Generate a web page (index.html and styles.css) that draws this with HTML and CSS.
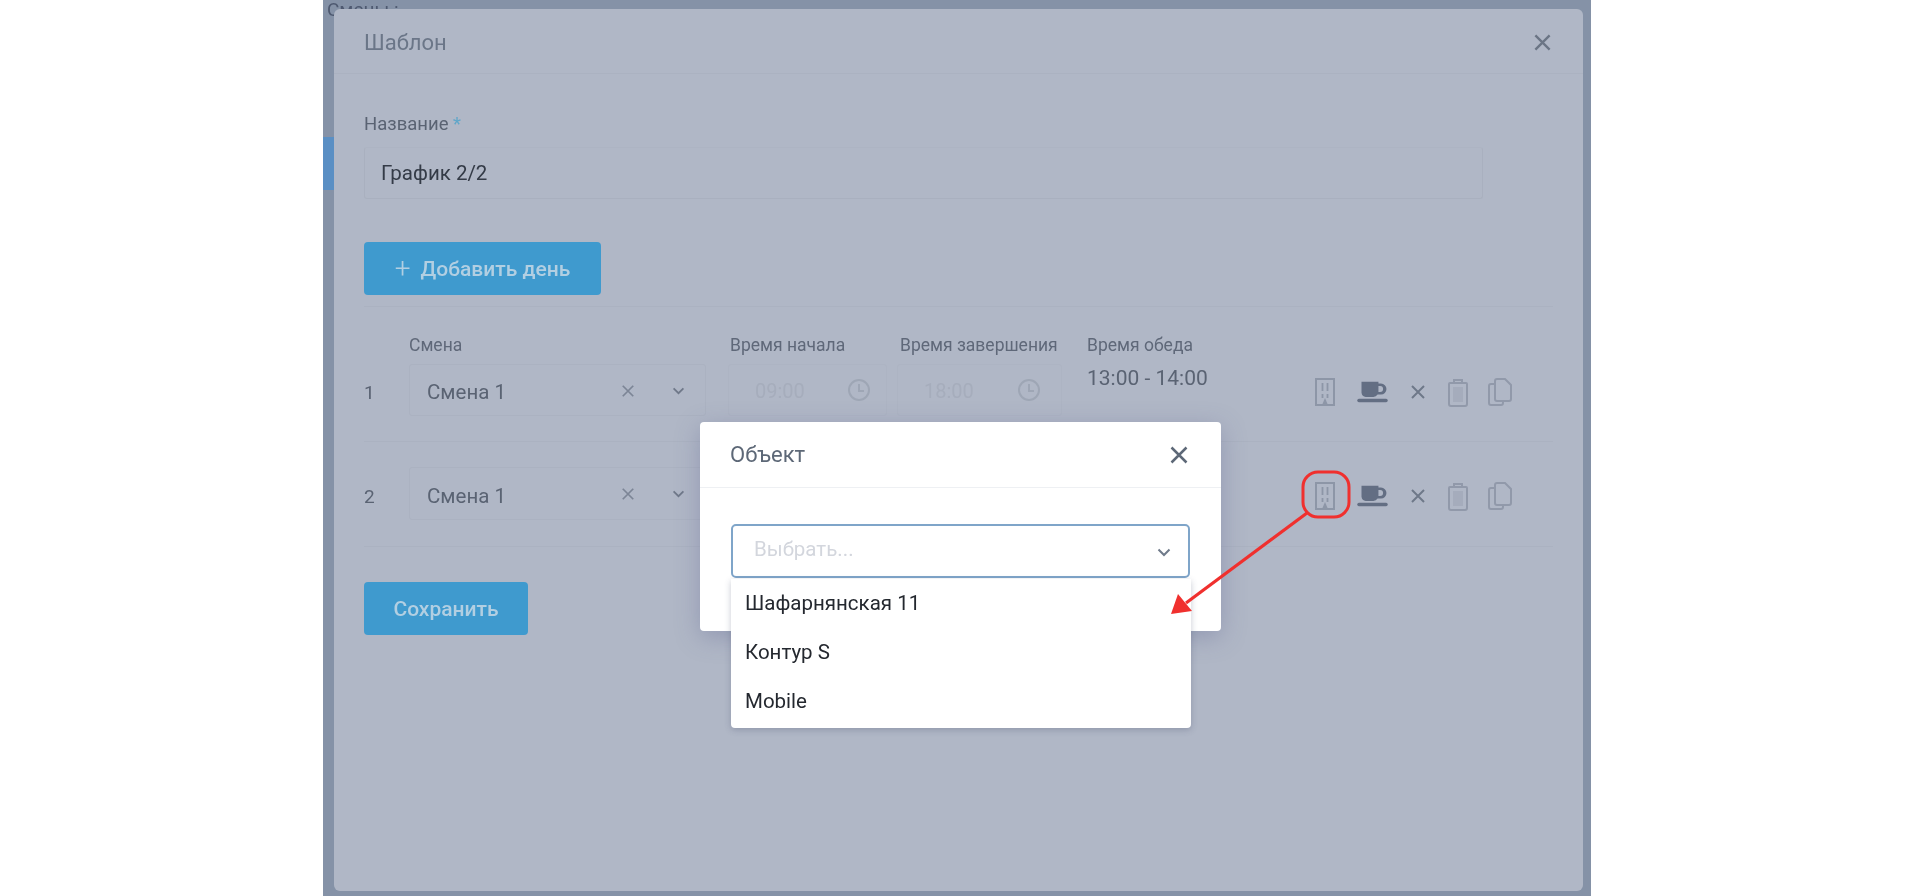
FILE: index.html
```html
<!DOCTYPE html>
<html lang="ru">
<head>
<meta charset="utf-8">
<title>Шаблон</title>
<link rel="stylesheet" href="styles.css">
</head>
<body>
<svg class="defs" width="0" height="0" aria-hidden="true">
  <defs>
    <symbol id="i-door" viewBox="0 0 22 30"><path d="M2 2h18v26H2z" fill="none" stroke="currentColor" stroke-width="2"/><path d="M8.500 6v8M13.500 6v8M8.500 17v4M13.500 17v4" stroke="currentColor" stroke-width="1.800" fill="none"/><path d="M11 21l3 7H8z" fill="currentColor"/></symbol>
    <symbol id="i-cup" viewBox="0 0 36 26"><path d="M5 1h20v2h3a6 6 0 0 1 0 13h-4a6 6 0 0 1-5 3H10a6 6 0 0 1-5-5z" fill="currentColor"/><path d="M25 6v7h2a3.500 3.500 0 0 0 0-7z" fill="#b0b7c6"/><rect x="0" y="21" width="36" height="4" rx="2" fill="currentColor"/></symbol>
    <symbol id="i-x" viewBox="0 0 16 16"><path d="M2 2l12 12M14 2L2 14" stroke="currentColor" stroke-width="2" fill="none"/></symbol>
    <symbol id="i-trash" viewBox="0 0 22 30"><path d="M3 6h16a1 1 0 0 1 1 1v20a2 2 0 0 1-2 2H4a2 2 0 0 1-2-2V7a1 1 0 0 1 1-1zM7 6V3h8v3" fill="none" stroke="currentColor" stroke-width="2"/><path d="M6 10h10v15H6z" fill="currentColor" opacity=".35"/></symbol>
    <symbol id="i-copy" viewBox="0 0 24 30"><path d="M9 2h8l6 6v14a2 2 0 0 1-2 2H9a2 2 0 0 1-2-2V4a2 2 0 0 1 2-2z" fill="none" stroke="currentColor" stroke-width="2"/><path d="M6 7H3a2 2 0 0 0-2 2v17a2 2 0 0 0 2 2h10a2 2 0 0 0 2-2v-2" fill="none" stroke="currentColor" stroke-width="2"/></symbol>
    <symbol id="i-clock" viewBox="0 0 24 24"><circle cx="12" cy="12" r="10" fill="none" stroke="currentColor" stroke-width="2"/><path d="M12 6v7h5" fill="none" stroke="currentColor" stroke-width="2"/></symbol>
    <symbol id="i-chev" viewBox="0 0 14 9"><path d="M1.500 1.500L7 7l5.500-5.500" fill="none" stroke="currentColor" stroke-width="2"/></symbol>
  </defs>
</svg>

<div class="page">
  <div class="backdrop">
    <div class="stray">Смены :</div>
    <div class="side-tab"></div>
    <section class="modal">
      <header class="modal-head">
        <h1 class="modal-title">Шаблон</h1>
        <svg class="modal-close"><use href="#i-x"/></svg>
      </header>
      <div class="modal-body">
        <label class="field-label">Название <span class="req">*</span></label>
        <div class="name-input">График 2/2</div>
        <button class="btn btn-add" type="button"><span class="plus">+</span>Добавить день</button>

        <div class="day day-first">
          <div class="num">1</div>
          <div class="col col-shift">
            <div class="col-label">Смена</div>
            <div class="select"><span class="select-val">Смена 1</span><svg class="sel-x"><use href="#i-x"/></svg><svg class="sel-chev"><use href="#i-chev"/></svg></div>
          </div>
          <div class="col col-start">
            <div class="col-label">Время начала</div>
            <div class="time"><span>09:00</span><svg class="clock"><use href="#i-clock"/></svg></div>
          </div>
          <div class="col col-end">
            <div class="col-label">Время завершения</div>
            <div class="time"><span>18:00</span><svg class="clock"><use href="#i-clock"/></svg></div>
          </div>
          <div class="col col-lunch">
            <div class="col-label">Время обеда</div>
            <div class="lunch">13:00 - 14:00</div>
          </div>
          <div class="actions">
            <svg class="a-door"><use href="#i-door"/></svg>
            <svg class="a-cup"><use href="#i-cup"/></svg>
            <svg class="a-x"><use href="#i-x"/></svg>
            <svg class="a-trash"><use href="#i-trash"/></svg>
            <svg class="a-copy"><use href="#i-copy"/></svg>
          </div>
        </div>

        <div class="day day-second">
          <div class="num">2</div>
          <div class="col col-shift">
            <div class="select"><span class="select-val">Смена 1</span><svg class="sel-x"><use href="#i-x"/></svg><svg class="sel-chev"><use href="#i-chev"/></svg></div>
          </div>
          <div class="col col-start">
            <div class="time"><span>09:00</span><svg class="clock"><use href="#i-clock"/></svg></div>
          </div>
          <div class="col col-end">
            <div class="time"><span>18:00</span><svg class="clock"><use href="#i-clock"/></svg></div>
          </div>
          <div class="col col-lunch">
            <div class="lunch">13:00 - 14:00</div>
          </div>
          <div class="actions">
            <svg class="a-door"><use href="#i-door"/></svg>
            <svg class="a-cup"><use href="#i-cup"/></svg>
            <svg class="a-x"><use href="#i-x"/></svg>
            <svg class="a-trash"><use href="#i-trash"/></svg>
            <svg class="a-copy"><use href="#i-copy"/></svg>
          </div>
        </div>

        <button class="btn btn-save" type="button">Сохранить</button>
      </div>
    </section>
  </div>

  <section class="dialog">
    <header class="dialog-head">
      <h2 class="dialog-title">Объект</h2>
      <svg class="dialog-close"><use href="#i-x"/></svg>
    </header>
    <div class="dialog-body">
      <div class="dialog-select"><span class="placeholder">Выбрать...</span><svg class="dialog-chev"><use href="#i-chev"/></svg></div>
      <ul class="menu">
        <li>Шафарнянская 11</li>
        <li>Контур S</li>
        <li>Mobile</li>
      </ul>
    </div>
  </section>

  <svg class="note" viewBox="0 0 1920 896" width="1920" height="896" aria-hidden="true">
    <rect x="1303" y="472" width="46" height="45" rx="15" fill="none" stroke="#f0302e" stroke-width="3"/>
    <path d="M1307 513L1186 603" stroke="#f0302e" stroke-width="3.200" fill="none"/>
    <path d="M1171 614L1178 594L1192 611z" fill="#f0302e"/>
  </svg>
</div>
</body>
</html>
```
FILE: styles.css
```css
* { box-sizing: border-box; }
html, body { margin: 0; padding: 0; background: #fff; }
body { font-family: Roboto, "Liberation Sans", sans-serif; overflow: hidden; }
.defs { position: absolute; }

.page { position: relative; width: 1920px; height: 896px; overflow: hidden; background: #fff; filter: blur(0.6px); }

.backdrop { position: relative; width: 1268px; height: 896px; margin-left: 323px; padding: 9px 8px 5px 11px; background: #8592a7; overflow: hidden; }
.stray { position: absolute; left: 4px; top: 0; font-size: 19px; line-height: 20px; color: #4e5970; }
.side-tab { position: absolute; left: 0; top: 137px; width: 11px; height: 53px; background: #5a8fc4; }

.modal { position: relative; z-index: 1; height: 882px; background: #b0b7c6; border-radius: 6px; }
.modal-head { height: 65px; padding: 2px 31px 0 30px; display: flex; align-items: center; justify-content: space-between; border-bottom: 1px solid #abb2c1; }
.modal-title { margin: 0; font-size: 22px; font-weight: 400; color: #6b7688; }
.modal-close { width: 19px; height: 19px; color: #6b7585; }

.modal-body { padding: 40px 30px 0; }
.field-label { display: block; font-size: 18.500px; line-height: 20px; color: #5a6373; margin-bottom: 13px; }
.req { color: #5fa6c9; }
.name-input { width: 1119px; height: 52px; padding-left: 16px; display: flex; align-items: center; font-size: 20.500px; color: #343b47; border: 1px solid #a9b0bf; border-top-color: #adb4c3; border-radius: 3px; }

.btn { display: flex; align-items: center; justify-content: center; height: 53px; border: 0; border-radius: 4px; background: #3f9ace; color: #b2cfe2; font: 500 21px Roboto, "Liberation Sans", sans-serif; }
.btn-add { width: 237px; margin-top: 43px; }
.plus { font-size: 28px; font-weight: 300; margin-right: 10px; line-height: 1; }
.btn-save { width: 164px; margin-top: 35px; }

.day { display: flex; border-bottom: 1px solid #abb2c1; }
.day-first { margin-top: 11px; border-top: 1px solid #abb2c1; padding: 28px 0 25px; }
.day-second { padding: 25px 0 26px; }
.day-second .select, .day-second .time { height: 53px; }

.num { width: 45px; align-self: flex-end; height: 52px; line-height: 57px; font-size: 19px; color: #5a6373; }
.col-shift { width: 297px; margin-right: 22px; }
.col-start { width: 159px; margin-right: 10px; }
.col-end { width: 165px; margin-right: 25px; }
.col-lunch { width: 227px; }
.col-label { height: 20px; margin-bottom: 9px; font-size: 17.500px; line-height: 20px; color: #5f6879; white-space: nowrap; }
.col-start .col-label { padding-left: 2px; }
.col-end .col-label { padding-left: 3px; }

.select { position: relative; height: 52px; padding: 4px 0 0 17px; display: flex; align-items: center; border: 1px solid #abb2c1; border-radius: 3px; }
.select-val { font-size: 20.500px; color: #5a6373; }
.sel-x { position: absolute; left: 211px; top: 19px; width: 14px; height: 14px; color: #7c8596; }
.sel-chev { position: absolute; left: 262px; top: 22px; width: 13px; height: 8px; color: #6f7889; }

.time { position: relative; height: 52px; padding: 2px 0 0 26px; display: flex; align-items: center; border: 1px solid #adb4c3; font-size: 20px; color: #a6adbc; border-radius: 3px; }
.clock { position: absolute; right: 15px; top: 13px; width: 24px; height: 24px; color: #9ea6b5; }
.col-end .clock { right: 20px; }
.lunch { font-size: 21px; line-height: 28px; color: #5a6373; }

.actions { display: flex; align-items: center; gap: 19px; align-self: flex-end; height: 52px; padding-top: 3px; }
.actions svg { display: block; }
.a-door { width: 22px; height: 30px; color: #8d96a7; }
.a-cup { width: 31px; height: 22px; margin: 0 3px 0 2px; color: #636e83; }
.a-x { width: 16px; height: 16px; color: #6e7889; margin-right: 2px; }
.a-trash { width: 22px; height: 30px; color: #9199aa; }
.a-copy { width: 24px; height: 30px; color: #9199aa; }

.dialog { position: absolute; z-index: 2; left: 700px; top: 422px; width: 521px; height: 209px; background: #fff; border-radius: 4px; box-shadow: 0 6px 24px rgba(90, 95, 140, .35); }
.dialog-head { height: 66px; padding: 0 32px 0 30px; display: flex; align-items: center; justify-content: space-between; border-bottom: 1px solid #eef0f3; }
.dialog-title { margin: 0; font-size: 22px; font-weight: 400; color: #5d6877; }
.dialog-close { width: 20px; height: 20px; color: #5d6877; }
.dialog-body { position: relative; padding: 36px 31px 0; }
.dialog-select { position: relative; height: 54px; padding: 0 0 5px 21px; display: flex; align-items: center; border: 2px solid #7fa5c9; border-radius: 5px; background: #fff; }
.placeholder { font-size: 20.500px; color: #d3d6dd; }
.dialog-chev { position: absolute; right: 17px; top: 22px; width: 14px; height: 9px; color: #6f7a8a; }
.menu { position: relative; margin: 1px 0 0; padding: 0; width: 460px; height: 149px; list-style: none; background: #fff; border-radius: 0 0 4px 4px; box-shadow: 0 2px 6px rgba(70, 80, 110, .3); }
.menu li { height: 49px; line-height: 49px; padding-left: 14px; font-size: 20.500px; color: #24282f; }

.note { position: absolute; z-index: 3; left: 0; top: 0; }
```
